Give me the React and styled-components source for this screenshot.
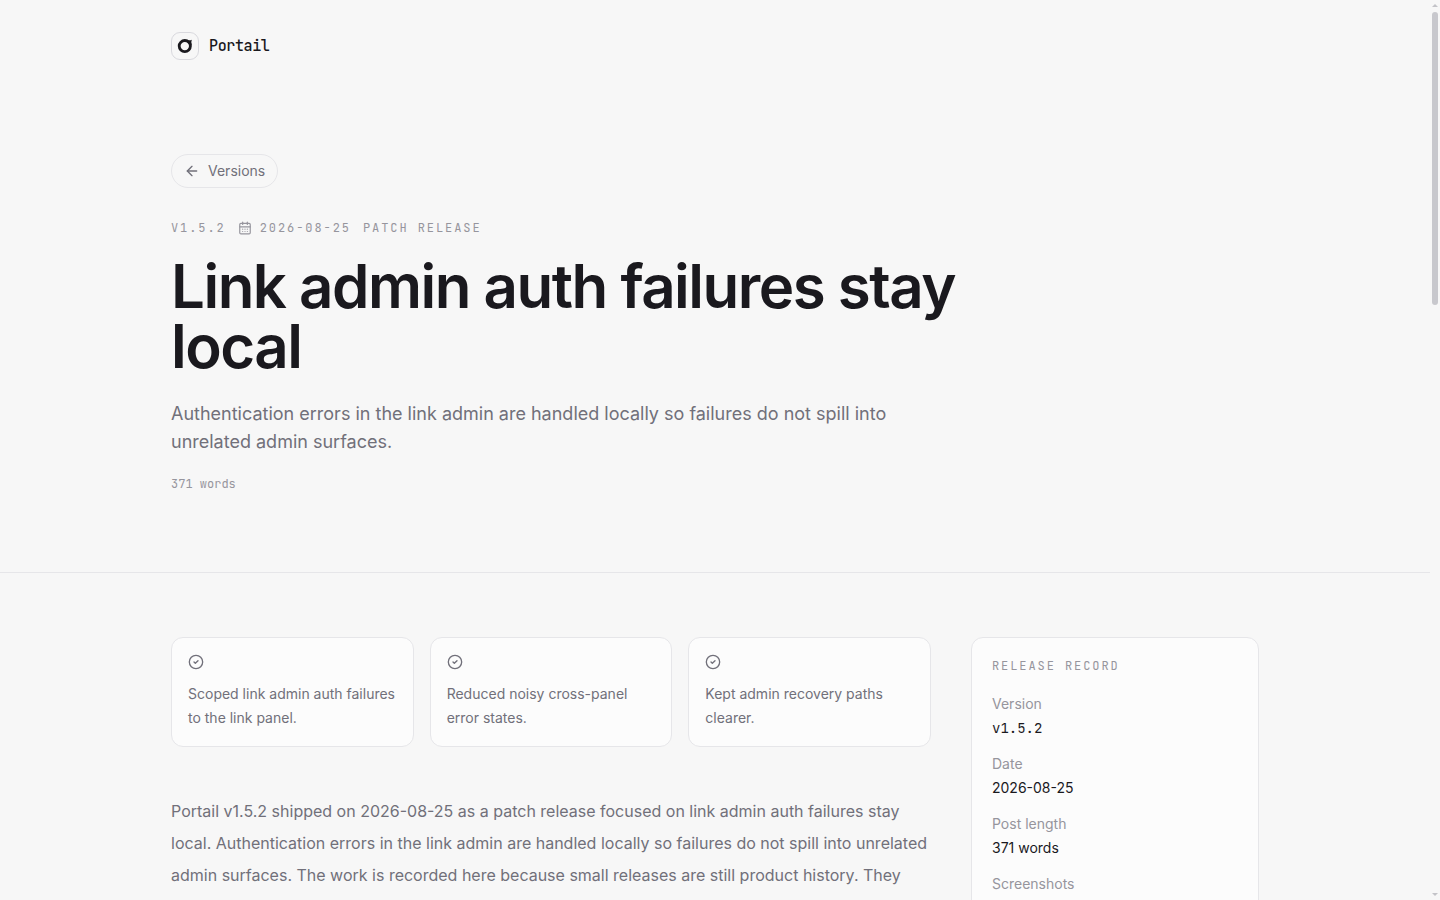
import React from 'react';
import styled, { createGlobalStyle } from 'styled-components';
import { ArrowLeft, CalendarDays, CircleCheck } from 'lucide-react';

const highlights = [
  'Scoped link admin auth failures to the link panel.',
  'Reduced noisy cross-panel error states.',
  'Kept admin recovery paths clearer.',
];

const record = [
  { label: 'Version', value: 'v1.5.2', mono: true },
  { label: 'Date', value: '2026-08-25' },
  { label: 'Post length', value: '371 words' },
  { label: 'Screenshots', value: '' },
];

const App = () => {
  return (
    <Shell>
      <GlobalStyle />
      <Page>
        <Hero>
          <Inner>
            <Brand href="#home">
              <LogoBox>
                <svg width="18" height="18" viewBox="0 0 18 18" fill="none" aria-hidden="true">
                  <circle cx="8.8" cy="9.1" r="5.6" stroke="#1a191e" strokeWidth="2.8" />
                  <path d="M10.5 2.4 Q13 4 15.8 2.8 Q14.8 5.2 15.7 8 L13 6 Z" fill="#1a191e" />
                </svg>
              </LogoBox>
              Portail
            </Brand>
            <BackLink href="#versions">
              <ArrowLeft size={16} />
              Versions
            </BackLink>
            <Meta>
              <span>v1.5.2</span>
              <MetaDate>
                <CalendarDays size={14} />
                2026-08-25
              </MetaDate>
              <span>Patch release</span>
            </Meta>
            <Title>Link admin auth failures stay local</Title>
            <Lead>
              Authentication errors in the link admin are handled locally so failures do not spill
              into unrelated admin surfaces.
            </Lead>
            <WordCount>371 words</WordCount>
          </Inner>
        </Hero>
        <Content>
          <article>
            <Highlights>
              {highlights.map((text) => (
                <Highlight key={text}>
                  <CircleCheck size={16} />
                  <p>{text}</p>
                </Highlight>
              ))}
            </Highlights>
            <Body>
              Portail v1.5.2 shipped on 2026-08-25 as a patch release focused on link admin auth
              failures stay local. Authentication errors in the link admin are handled locally so
              failures do not spill into unrelated admin surfaces. The work is recorded here
              because small releases are still product history. They
            </Body>
          </article>
          <Record>
            <RecordTitle>Release record</RecordTitle>
            <RecordList>
              {record.map((item) => (
                <div key={item.label}>
                  <RecordLabel>{item.label}</RecordLabel>
                  <RecordValue $mono={item.mono}>{item.value}</RecordValue>
                </div>
              ))}
            </RecordList>
          </Record>
        </Content>
      </Page>
      <ScrollRail aria-hidden="true">
        <svg width="6" height="3" viewBox="0 0 6 3">
          <path d="M0 3 L3 0 L6 3 Z" fill="#c3c3c8" />
        </svg>
        <ScrollTrack>
          <ScrollThumb />
        </ScrollTrack>
        <svg width="6" height="3" viewBox="0 0 6 3">
          <path d="M0 0 L6 0 L3 3 Z" fill="#c3c3c8" />
        </svg>
      </ScrollRail>
    </Shell>
  );
};

const mono = `"JetBrains Mono", "DejaVu Sans Mono", monospace`;

const GlobalStyle = createGlobalStyle`
  * {
    box-sizing: border-box;
    margin: 0;
    padding: 0;
  }

  body {
    background: #f7f7f7;
    color: #1a191e;
    font-family: Inter, sans-serif;
    font-size: 16px;
  }

  svg {
    display: block;
    flex-shrink: 0;
  }
`;

const Shell = styled.div`
  display: flex;
  height: 100vh;
`;

const Page = styled.main`
  flex: 1;
  min-width: 0;
  overflow-y: auto;
  scrollbar-width: none;
`;

const ScrollRail = styled.div`
  display: flex;
  flex-direction: column;
  align-items: center;
  gap: 5px;
  width: 10px;
  padding: 4px 0;
`;

const ScrollTrack = styled.div`
  flex: 1;
`;

const ScrollThumb = styled.div`
  width: 6px;
  height: 33.4%;
  border-radius: 3px;
  background: #c8c8cd;
`;

const Inner = styled.div`
  max-width: 1088px;
  margin: 0 auto;
`;

const Hero = styled.header`
  padding: 32px 24px 80px;
  border-bottom: 1px solid #e6e6e9;
`;

const Brand = styled.a`
  display: flex;
  align-items: center;
  gap: 10px;
  width: fit-content;
  margin-bottom: 94px;
  color: #1a191e;
  font-family: ${mono};
  font-size: 15px;
  font-weight: 500;
  letter-spacing: -0.025em;
  text-decoration: none;
`;

const LogoBox = styled.span`
  display: flex;
  align-items: center;
  justify-content: center;
  width: 28px;
  height: 28px;
  border: 1px solid #d9d9de;
  border-radius: 9px;
`;

const BackLink = styled.a`
  display: flex;
  align-items: center;
  gap: 8px;
  width: fit-content;
  padding: 6px 12px;
  margin-bottom: 32px;
  border: 1px solid #e6e6e9;
  border-radius: 17px;
  color: #71707a;
  font-size: 14px;
  line-height: 20px;
  text-decoration: none;
`;

const Meta = styled.div`
  display: flex;
  flex-wrap: wrap;
  gap: 12px;
  margin-bottom: 20px;
  color: #96959d;
  font-family: ${mono};
  font-size: 12px;
  line-height: 16px;
  letter-spacing: 0.16em;
  text-transform: uppercase;
`;

const MetaDate = styled.span`
  display: flex;
  align-items: center;
  gap: 8px;
`;

const Title = styled.h1`
  max-width: 896px;
  margin-bottom: 24px;
  font-size: 60px;
  font-weight: 600;
  line-height: 60px;
  letter-spacing: -0.025em;
`;

const Lead = styled.p`
  max-width: 768px;
  margin-bottom: 20px;
  color: #71707a;
  font-size: 18px;
  line-height: 28px;
`;

const WordCount = styled.p`
  color: #96959d;
  font-family: ${mono};
  font-size: 12px;
  line-height: 16px;
`;

const Content = styled.div`
  display: grid;
  grid-template-columns: minmax(0, 1fr) 288px;
  align-items: start;
  gap: 40px;
  max-width: 1136px;
  margin: 0 auto;
  padding: 64px 24px;
`;

const Highlights = styled.ul`
  display: grid;
  grid-template-columns: repeat(3, minmax(0, 1fr));
  gap: 16px;
  margin-bottom: 48px;
  list-style: none;
`;

const Highlight = styled.li`
  padding: 16px;
  background: #fcfcfc;
  border: 1px solid #e6e6e9;
  border-radius: 12px;
  color: #71707a;
  font-size: 14px;
  line-height: 24px;

  p {
    margin-top: 12px;
  }
`;

const Body = styled.p`
  color: #71707a;
  font-size: 16px;
  line-height: 32px;
`;

const Record = styled.aside`
  padding: 20px;
  background: #fcfcfc;
  border: 1px solid #e6e6e9;
  border-radius: 12px;
`;

const RecordTitle = styled.h2`
  margin-bottom: 18px;
  color: #96959d;
  font-family: ${mono};
  font-size: 12px;
  font-weight: 400;
  line-height: 16px;
  letter-spacing: 0.16em;
  text-transform: uppercase;
`;

const RecordList = styled.dl`
  display: grid;
  gap: 12px;
  font-size: 14px;
  line-height: 24px;
`;

const RecordLabel = styled.dt`
  color: #96959d;
`;

const RecordValue = styled.dd`
  min-height: 24px;
  color: #1a191e;
  font-family: ${(props) => (props.$mono ? mono : 'inherit')};
`;

export default App;
